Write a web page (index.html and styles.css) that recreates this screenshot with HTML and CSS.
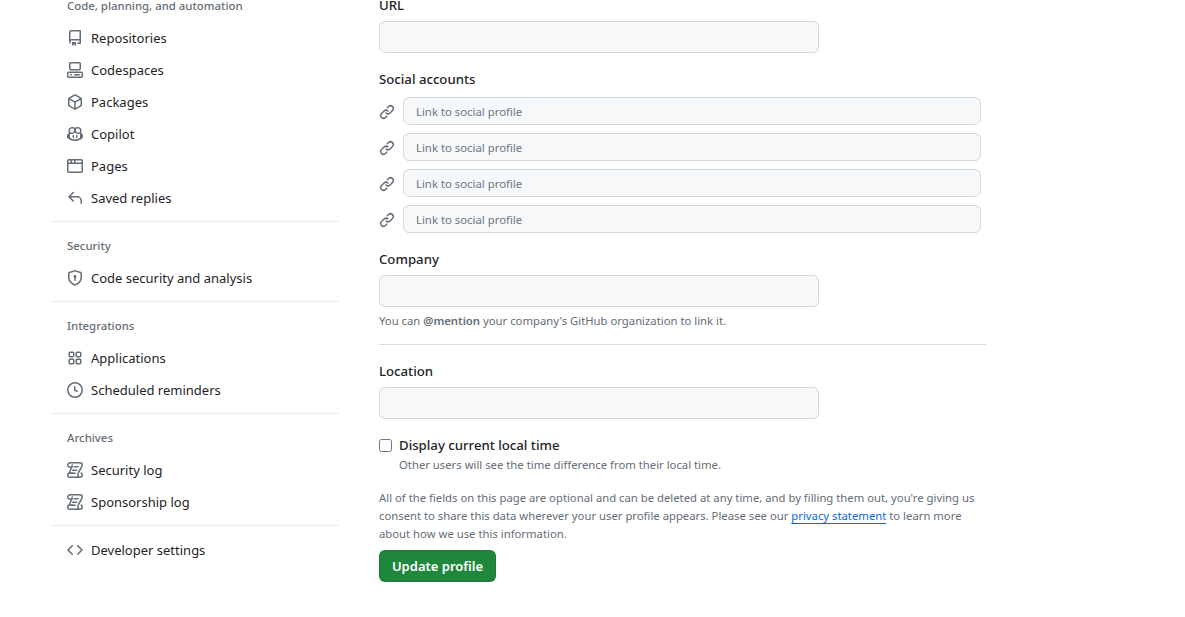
FILE: index.html
```
<!DOCTYPE html>
<html lang="en">
<head>
<meta charset="utf-8">
<title>Public profile</title>
<link rel="stylesheet" href="styles.css">
</head>
<body>
<svg class="sprite" xmlns="http://www.w3.org/2000/svg">
<symbol id="i-repo" viewBox="0 0 16 16"><path d="M2 2.5A2.5 2.5 0 0 1 4.5 0h8.75a.75.75 0 0 1 .75.75v12.5a.75.75 0 0 1-.75.75h-2.5a.75.75 0 0 1 0-1.5h1.75v-2h-8a1 1 0 0 0-.714 1.7.75.75 0 1 1-1.072 1.05A2.495 2.495 0 0 1 2 11.5Zm10.5-1h-8a1 1 0 0 0-1 1v6.708A2.486 2.486 0 0 1 4.5 9h8ZM5 12.25a.25.25 0 0 1 .25-.25h3.5a.25.25 0 0 1 .25.25v3.25a.25.25 0 0 1-.4.2l-1.45-1.087a.249.249 0 0 0-.3 0L5.4 15.7a.25.25 0 0 1-.4-.2Z"/></symbol>
<symbol id="i-codespaces" viewBox="0 0 16 16"><path d="M0 11.25c0-.966.784-1.75 1.75-1.75h12.5c.966 0 1.75.784 1.75 1.75v3A1.75 1.75 0 0 1 14.25 16H1.75A1.75 1.75 0 0 1 0 14.25Zm2-9.5C2 .784 2.784 0 3.75 0h8.5C13.216 0 14 .784 14 1.75v5a1.75 1.75 0 0 1-1.75 1.75h-8.5A1.75 1.75 0 0 1 2 6.75Zm1.75-.25a.25.25 0 0 0-.25.25v5c0 .138.112.25.25.25h8.5a.25.25 0 0 0 .25-.25v-5a.25.25 0 0 0-.25-.25Zm-2 9.5a.25.25 0 0 0-.25.25v3c0 .138.112.25.25.25h12.5a.25.25 0 0 0 .25-.25v-3a.25.25 0 0 0-.25-.25Z"/><path d="M7 12.75a.75.75 0 0 1 .75-.75h4.5a.75.75 0 0 1 0 1.5h-4.5a.75.75 0 0 1-.75-.75Zm-4 0a.75.75 0 0 1 .75-.75h.5a.75.75 0 0 1 0 1.5h-.5a.75.75 0 0 1-.75-.75Z"/></symbol>
<symbol id="i-package" viewBox="0 0 16 16"><path d="m8.878.392 5.25 3.045c.54.314.872.89.872 1.514v6.098a1.75 1.75 0 0 1-.872 1.514l-5.25 3.045a1.75 1.75 0 0 1-1.756 0l-5.25-3.045A1.75 1.75 0 0 1 1 11.049V4.951c0-.624.332-1.201.872-1.514L7.122.392a1.75 1.75 0 0 1 1.756 0ZM7.875 1.69l-4.63 2.685L8 7.133l4.755-2.758-4.63-2.685a.248.248 0 0 0-.25 0ZM2.5 5.677v5.372c0 .09.047.171.125.216l4.625 2.683V8.432Zm6.25 8.271 4.625-2.683a.25.25 0 0 0 .125-.216V5.677L8.75 8.432Z"/></symbol>
<symbol id="i-copilot" viewBox="0 0 16 16"><path d="M7.998 15.035c-4.562 0-7.873-2.914-7.998-3.749V9.338c.085-.628.677-1.686 1.588-2.065.013-.07.024-.143.036-.218.029-.183.06-.384.126-.612-.201-.508-.254-1.084-.254-1.656 0-.87.128-1.769.693-2.484.579-.733 1.494-1.124 2.724-1.261 1.206-.134 2.262.034 2.944.765.05.053.096.108.139.165.044-.057.094-.112.143-.165.682-.731 1.738-.899 2.944-.765 1.23.137 2.145.528 2.724 1.261.566.715.693 1.614.693 2.484 0 .572-.053 1.148-.254 1.656.066.228.098.429.126.612.012.076.024.148.037.218.924.385 1.522 1.471 1.591 2.095v1.872c0 .766-3.351 3.795-8.002 3.795Zm0-1.485c2.28 0 4.584-1.11 5.002-1.433V7.862l-.023-.116c-.49.21-1.075.291-1.727.291-1.146 0-2.059-.327-2.71-.991A3.222 3.222 0 0 1 8 6.303a3.24 3.24 0 0 1-.544.743c-.65.664-1.563.991-2.71.991-.652 0-1.236-.081-1.727-.291l-.023.116v4.255c.419.323 2.722 1.433 5.002 1.433ZM6.762 2.83c-.193-.206-.637-.413-1.682-.297-1.019.113-1.479.404-1.713.7-.247.312-.369.789-.369 1.554 0 .793.129 1.171.308 1.371.162.181.519.379 1.442.379.853 0 1.339-.235 1.638-.54.315-.322.527-.827.617-1.553.117-.935-.037-1.395-.241-1.614Zm4.155-.297c-1.044-.116-1.488.091-1.681.297-.204.219-.359.679-.242 1.614.091.726.303 1.231.618 1.553.299.305.784.54 1.638.54.922 0 1.28-.198 1.442-.379.179-.2.308-.578.308-1.371 0-.765-.123-1.242-.37-1.554-.233-.296-.693-.587-1.713-.7Z"/><path d="M6.25 9.037a.75.75 0 0 1 .75.75v1.501a.75.75 0 0 1-1.5 0V9.787a.75.75 0 0 1 .75-.75Zm4.25.75v1.501a.75.75 0 0 1-1.5 0V9.787a.75.75 0 0 1 1.5 0Z"/></symbol>
<symbol id="i-browser" viewBox="0 0 16 16"><path d="M0 2.75C0 1.784.784 1 1.75 1h12.5c.966 0 1.75.784 1.75 1.75v10.5A1.75 1.75 0 0 1 14.25 15H1.75A1.75 1.75 0 0 1 0 13.25ZM14.5 6h-13v7.25c0 .138.112.25.25.25h12.5a.25.25 0 0 0 .25-.25Zm-6-3.5v2h6V2.75a.25.25 0 0 0-.25-.25ZM5 2.5v2h2v-2Zm-3.25 0a.25.25 0 0 0-.25.25V4.5h2v-2Z"/></symbol>
<symbol id="i-reply" viewBox="0 0 16 16"><path d="M6.78 1.97a.75.75 0 0 1 0 1.06L3.81 6h6.44A4.75 4.75 0 0 1 15 10.75v2.5a.75.75 0 0 1-1.5 0v-2.5a3.25 3.25 0 0 0-3.25-3.25H3.81l2.97 2.97a.749.749 0 0 1-.326 1.275.749.749 0 0 1-.734-.215L1.47 7.28a.75.75 0 0 1 0-1.06l4.25-4.25a.75.75 0 0 1 1.06 0Z"/></symbol>
<symbol id="i-shield" viewBox="0 0 16 16"><path d="m8.533.133 5.25 1.68A1.75 1.75 0 0 1 15 3.48V7c0 1.566-.32 3.182-1.303 4.682-.983 1.498-2.585 2.813-5.032 3.855a1.697 1.697 0 0 1-1.33 0c-2.447-1.042-4.049-2.357-5.032-3.855C1.32 10.182 1 8.566 1 7V3.48a1.75 1.75 0 0 1 1.217-1.667l5.25-1.68a1.748 1.748 0 0 1 1.066 0Zm-.61 1.429.001.001-5.25 1.68a.251.251 0 0 0-.174.237V7c0 1.36.275 2.666 1.057 3.859.784 1.194 2.121 2.342 4.366 3.298a.196.196 0 0 0 .154 0c2.245-.957 3.582-2.103 4.366-3.297C13.225 9.666 13.5 8.358 13.5 7V3.48a.25.25 0 0 0-.174-.238l-5.25-1.68a.25.25 0 0 0-.153 0ZM9.5 6.5c0 .536-.286 1.032-.75 1.3v2.45a.75.75 0 0 1-1.5 0V7.8A1.5 1.5 0 1 1 9.5 6.5Z"/></symbol>
<symbol id="i-apps" viewBox="0 0 16 16"><path d="M1.5 3.25c0-.966.784-1.75 1.75-1.75h2.5c.966 0 1.75.784 1.75 1.75v2.5A1.75 1.75 0 0 1 5.75 7.5h-2.5A1.75 1.75 0 0 1 1.5 5.75Zm7 0c0-.966.784-1.75 1.75-1.75h2.5c.966 0 1.75.784 1.75 1.75v2.5a1.75 1.75 0 0 1-1.75 1.75h-2.5A1.75 1.75 0 0 1 8.5 5.75Zm-7 7c0-.966.784-1.75 1.75-1.75h2.5c.966 0 1.75.784 1.75 1.75v2.5a1.75 1.75 0 0 1-1.75 1.75h-2.5a1.75 1.75 0 0 1-1.75-1.75Zm7 0c0-.966.784-1.75 1.75-1.75h2.5c.966 0 1.75.784 1.75 1.75v2.5a1.75 1.75 0 0 1-1.75 1.75h-2.5a1.75 1.75 0 0 1-1.75-1.75ZM3.25 3a.25.25 0 0 0-.25.25v2.5c0 .138.112.25.25.25h2.5A.25.25 0 0 0 6 5.75v-2.5A.25.25 0 0 0 5.75 3Zm7 0a.25.25 0 0 0-.25.25v2.5c0 .138.112.25.25.25h2.5a.25.25 0 0 0 .25-.25v-2.5a.25.25 0 0 0-.25-.25Zm-7 7a.25.25 0 0 0-.25.25v2.5c0 .138.112.25.25.25h2.5a.25.25 0 0 0 .25-.25v-2.5a.25.25 0 0 0-.25-.25Zm7 0a.25.25 0 0 0-.25.25v2.5c0 .138.112.25.25.25h2.5a.25.25 0 0 0 .25-.25v-2.5a.25.25 0 0 0-.25-.25Z"/></symbol>
<symbol id="i-clock" viewBox="0 0 16 16"><path d="M8 0a8 8 0 1 1 0 16A8 8 0 0 1 8 0ZM1.5 8a6.5 6.5 0 1 0 13 0 6.5 6.5 0 0 0-13 0Zm7-3.25v2.992l2.028.812a.75.75 0 0 1-.557 1.392l-2.5-1A.751.751 0 0 1 7 8.25v-3.5a.75.75 0 0 1 1.5 0Z"/></symbol>
<symbol id="i-log" viewBox="0 0 16 16"><path class="stroke" d="M3 .75h10a2.25 2.25 0 0 1 2.25 2.25c0 2.9-4.5 6.4-4.5 10a2.25 2.25 0 0 0 2.25 2.25H3A2.25 2.25 0 0 1 .75 13c0-.9.5-1.6 1.2-2h3.3M3 .75A2.25 2.25 0 0 0 .75 3c0 .9.5 1.6 1.2 2h3.1M5.25 3c0 2.8-1.9 5-3.3 8M13 15.25A2.25 2.25 0 0 0 15.25 13c0-.8-.4-1.5-1-1.9"/><path class="stroke" d="M7 4.75h4M5.75 8.25h4M4.25 11.25h4"/></symbol>
<symbol id="i-code" viewBox="0 0 16 16"><path d="m11.28 3.22 4.25 4.25a.75.75 0 0 1 0 1.06l-4.25 4.25a.749.749 0 0 1-1.275-.326.749.749 0 0 1 .215-.734L13.94 8l-3.72-3.72a.749.749 0 0 1 .326-1.275.749.749 0 0 1 .734.215Zm-6.56 0a.751.751 0 0 1 1.042.018.751.751 0 0 1 .018 1.042L2.06 8l3.72 3.72a.749.749 0 0 1-.326 1.275.749.749 0 0 1-.734-.215L.47 8.53a.75.75 0 0 1 0-1.06Z"/></symbol>
<symbol id="i-link" viewBox="0 0 16 16"><path d="m7.775 3.275 1.25-1.25a3.5 3.5 0 1 1 4.95 4.95l-2.5 2.5a3.5 3.5 0 0 1-4.95 0 .751.751 0 0 1 .018-1.042.751.751 0 0 1 1.042-.018 1.998 1.998 0 0 0 2.83 0l2.5-2.5a2.002 2.002 0 0 0-2.83-2.83l-1.25 1.25a.751.751 0 0 1-1.042-.018.751.751 0 0 1-.018-1.042Zm-4.69 9.64a1.998 1.998 0 0 0 2.83 0l1.25-1.25a.751.751 0 0 1 1.042.018.751.751 0 0 1 .018 1.042l-1.25 1.25a3.5 3.5 0 1 1-4.95-4.95l2.5-2.5a3.5 3.5 0 0 1 4.95 0 .751.751 0 0 1-.018 1.042.751.751 0 0 1-1.042.018 1.998 1.998 0 0 0-2.83 0l-2.5 2.5a1.998 1.998 0 0 0 0 2.83Z"/></symbol>
</svg>

<div class="page">
  <nav class="side">
    <h3 class="side-head">Code, planning, and automation</h3>
    <a class="side-item"><svg class="ico"><use href="#i-repo"/></svg>Repositories</a>
    <a class="side-item"><svg class="ico"><use href="#i-codespaces"/></svg>Codespaces</a>
    <a class="side-item"><svg class="ico"><use href="#i-package"/></svg>Packages</a>
    <a class="side-item"><svg class="ico"><use href="#i-copilot"/></svg>Copilot</a>
    <a class="side-item"><svg class="ico"><use href="#i-browser"/></svg>Pages</a>
    <a class="side-item"><svg class="ico"><use href="#i-reply"/></svg>Saved replies</a>
    <hr class="side-rule">
    <h3 class="side-head">Security</h3>
    <a class="side-item"><svg class="ico"><use href="#i-shield"/></svg>Code security and analysis</a>
    <hr class="side-rule">
    <h3 class="side-head">Integrations</h3>
    <a class="side-item"><svg class="ico"><use href="#i-apps"/></svg>Applications</a>
    <a class="side-item"><svg class="ico"><use href="#i-clock"/></svg>Scheduled reminders</a>
    <hr class="side-rule">
    <h3 class="side-head">Archives</h3>
    <a class="side-item"><svg class="ico"><use href="#i-log"/></svg>Security log</a>
    <a class="side-item"><svg class="ico"><use href="#i-log"/></svg>Sponsorship log</a>
    <hr class="side-rule side-rule-last">
    <a class="side-item"><svg class="ico"><use href="#i-code"/></svg>Developer settings</a>
  </nav>

  <main class="form">
    <label class="lbl">URL</label>
    <input class="field" type="text">

    <label class="lbl lbl-social">Social accounts</label>
    <div class="socials">
      <div class="social"><svg class="ico"><use href="#i-link"/></svg><input class="field field-sm" type="text" placeholder="Link to social profile"></div>
      <div class="social"><svg class="ico"><use href="#i-link"/></svg><input class="field field-sm" type="text" placeholder="Link to social profile"></div>
      <div class="social"><svg class="ico"><use href="#i-link"/></svg><input class="field field-sm" type="text" placeholder="Link to social profile"></div>
      <div class="social"><svg class="ico"><use href="#i-link"/></svg><input class="field field-sm" type="text" placeholder="Link to social profile"></div>
    </div>

    <label class="lbl lbl-gap">Company</label>
    <input class="field" type="text">
    <p class="note note-company">You can <strong>@mention</strong> your company's GitHub organization to link it.</p>
    <hr class="form-rule">

    <label class="lbl">Location</label>
    <input class="field" type="text">

    <label class="check">
      <input class="check-box" type="checkbox">
      <span class="check-label">Display current local time</span>
    </label>
    <p class="note note-check">Other users will see the time difference from their local time.</p>

    <p class="note note-legal">All of the fields on this page are optional and can be deleted at any time, and by filling them out, you're giving us consent to share this data wherever your user profile appears. Please see our <a class="legal-link">privacy statement</a> to learn more about how we use this information.</p>

    <button class="btn" type="button">Update profile</button>
  </main>
</div>
</body>
</html>
```

FILE: styles.css
```
* { box-sizing: border-box; }
html, body { margin: 0; padding: 0; background: #fff; overflow: hidden; }
body {
  font-family: "Noto Sans", "Open Sans", "Liberation Sans", sans-serif;
  font-size: 13px;
  color: #1f2328;
}
.sprite { display: none; }
.page {
  display: flex;
  gap: 40px;
  padding-left: 51px;
  margin-top: -18px;
}
.side { width: 288px; flex: none; display: flex; flex-direction: column; }
.side-head {
  margin: 0;
  padding: 15px 16px 7px;
  font-size: 11.4px;
  line-height: 18px;
  font-weight: 500;
  color: #656d76;
}
.side-item {
  display: flex;
  align-items: center;
  gap: 8px;
  height: 32px;
  padding: 0 16px;
  line-height: 20px;
  color: #1f2328;
}
.ico { width: 16px; height: 16px; flex: none; fill: #656d76; }
.stroke { fill: none; stroke: #656d76; stroke-width: 1.5; stroke-linecap: round; stroke-linejoin: round; }
.side-rule {
  width: 100%;
  height: 1px;
  margin: 7px 0 0;
  border: 0;
  background: #e7eaee;
}
.side-rule-last { margin-bottom: 8px; }

.form { width: 607px; flex: none; display: flex; flex-direction: column; align-items: flex-start; padding-top: 13px; }
.lbl { display: block; font-weight: 500; font-size: 13.2px; line-height: 20px; margin-bottom: 6px; }
.lbl-social { margin-top: 16px; margin-bottom: 8px; }
.lbl-gap { margin-top: 16px; }
.field {
  display: block;
  width: 440px;
  height: 32px;
  padding: 0 12px;
  background: #f6f8fa;
  border: 1px solid #d0d7de;
  border-radius: 6px;
  font: inherit;
  color: #1f2328;
  outline: none;
}
.field-sm { width: 578px; height: 28px; font-size: 11.35px; }
.field-sm::placeholder { color: #6e7781; opacity: 1; }
.socials { display: flex; flex-direction: column; gap: 8px; }
.social { display: flex; align-items: center; gap: 8px; }
.social .ico { margin-top: 2px; }
.note { margin: 0; font-size: 11.3px; line-height: 18px; color: #656d76; }
.note strong { font-weight: 600; }
.note-company { margin-top: 5px; }
.form-rule { width: 100%; height: 1px; margin: 14px 0 16px; border: 0; background: #d8dee4; }
.check { display: flex; align-items: center; margin-top: 16px; height: 20px; }
.check-box { width: 13px; height: 13px; margin: 0 7px 0 0; }
.check-label { font-weight: 500; font-size: 13.2px; line-height: 20px; }
.note-check { margin-top: 1px; padding-left: 20px; }
.note-legal { margin-top: 15px; }
.legal-link { color: #0969da; text-decoration: underline; text-underline-offset: 3px; }
.btn {
  margin-top: 7px;
  width: 117px;
  height: 32px;
  padding: 0;
  background: #1f883d;
  border: 1px solid rgba(31, 35, 40, .15);
  border-radius: 6px;
  color: #fff;
  font: 600 13px/20px "Noto Sans", "Open Sans", "Liberation Sans", sans-serif;
}
```
